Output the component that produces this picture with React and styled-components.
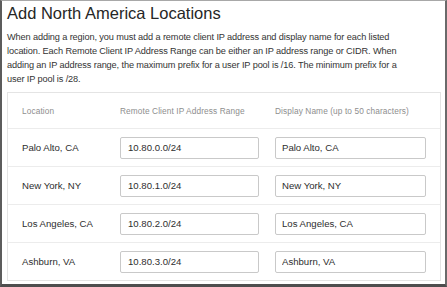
import React from 'react';
import styled, { createGlobalStyle } from 'styled-components';

const GlobalStyle = createGlobalStyle`
  html, body {
    margin: 0;
    padding: 0;
    background: #ffffff;
  }
  body {
    font-family: "Liberation Sans", Arial, sans-serif;
  }
`;

const locations = [
  { name: 'Palo Alto, CA', range: '10.80.0.0/24' },
  { name: 'New York, NY', range: '10.80.1.0/24' },
  { name: 'Los Angeles, CA', range: '10.80.2.0/24' },
  { name: 'Ashburn, VA', range: '10.80.3.0/24' },
];

// the intro wraps at these points in the original dialog
const introLines = [
  'When adding a region, you must add a remote client IP address and display name for each listed',
  'location. Each Remote Client IP Address Range can be either an IP address range or CIDR. When',
  'adding an IP address range, the maximum prefix for a user IP pool is /16. The minimum prefix for a',
  'user IP pool is /28.',
];

const Frame = styled.div`
  box-sizing: border-box;
  width: 447px;
  height: 287px;
  border-top: 1px solid #a8a8a8;
  border-left: 2px solid #5c5c5c;
  border-right: 2px solid #6a6a6a;
  border-bottom: 3px solid #4e4e4e;
  padding: 2px 4px 0 5px;
  background: #fff;
  overflow: hidden;
`;

const Title = styled.h1`
  margin: 0;
  font-family: "Liberation Sans", Arial, sans-serif;
  font-weight: 400;
  font-size: 16.5px;
  line-height: 20px;
  color: #262626;
`;

const Intro = styled.p`
  margin: 7px 0 6px;
  font-size: 9.2px;
  line-height: 14px;
  letter-spacing: -0.12px;
  color: #333;
  white-space: nowrap;
`;

const Card = styled.div`
  box-sizing: border-box;
  width: 434px;
  border: 1px solid #e4e4e4;
  padding: 0 14px;
`;

const Row = styled.div`
  box-sizing: border-box;
  display: grid;
  grid-template-columns: 98px 155px 151px;
  align-items: center;
  height: ${(p) => (p.$head ? '35px' : '38px')};
  margin: 0 -14px;
  padding: 0 14px;
  border-top: ${(p) => (p.$head ? 'none' : '1px solid #ececec')};
`;

const HeadLabel = styled.span`
  font-size: 8.3px;
  color: #8e8e8e;
  letter-spacing: 0.1px;
`;

const Place = styled.span`
  font-size: 9.6px;
  color: #2e2e2e;
`;

const Field = styled.input`
  box-sizing: border-box;
  height: 22px;
  width: ${(p) => p.$w}px;
  margin: 0;
  padding: 0 0 0 ${(p) => p.$pad}px;
  border: 1px solid #c9c9c9;
  border-radius: 2px;
  font-family: "Liberation Sans", Arial, sans-serif;
  font-size: 9.6px;
  color: #2e2e2e;
  background: #fff;
  outline: none;
`;

export default function App() {
  return (
    <>
      <GlobalStyle />
      <Frame>
        <Title>Add North America Locations</Title>
        <Intro>
          {introLines.map((line, i) => (
            <React.Fragment key={i}>
              {line}
              {i < introLines.length - 1 && <br />}
            </React.Fragment>
          ))}
        </Intro>
        <Card>
          <Row $head>
            <HeadLabel>Location</HeadLabel>
            <HeadLabel>Remote Client IP Address Range</HeadLabel>
            <HeadLabel>Display Name (up to 50 characters)</HeadLabel>
          </Row>
          {locations.map((loc) => (
            <Row key={loc.name}>
              <Place>{loc.name}</Place>
              <Field $w={139} $pad={7} defaultValue={loc.range} />
              <Field $w={151} $pad={6} defaultValue={loc.name} />
            </Row>
          ))}
        </Card>
      </Frame>
    </>
  );
}
